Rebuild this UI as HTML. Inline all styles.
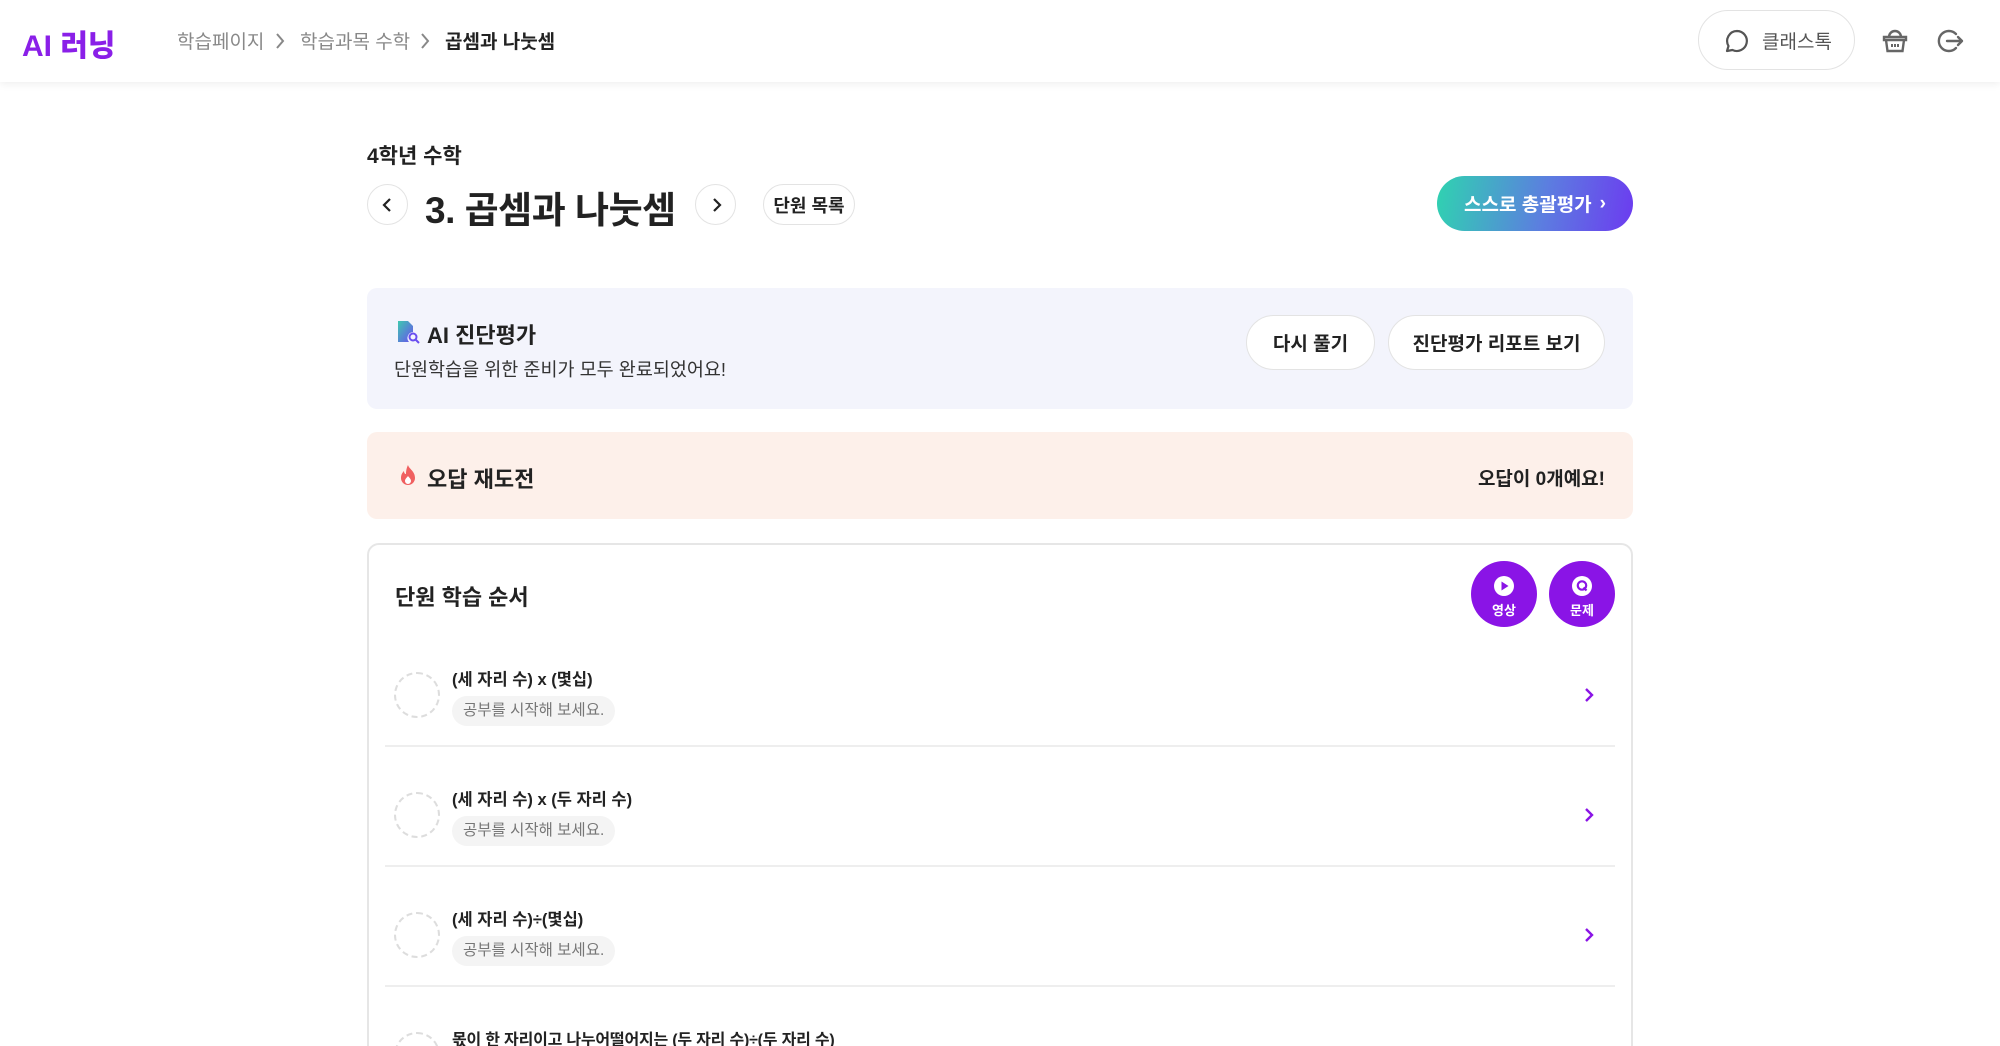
<!DOCTYPE html>
<html style="overflow:hidden;width:2000px;height:1046px"><head><meta charset="utf-8">
<style>
*{margin:0;padding:0;box-sizing:border-box}
body{width:2000px;height:1046px;overflow:hidden;background:#fff;font-family:"Liberation Sans","Noto Sans CJK KR",sans-serif;color:#222;position:relative}
.a{position:absolute}
.hdr{left:0;top:0;width:2000px;height:82px;background:#fff;box-shadow:0 2px 8px rgba(0,0,0,0.07);z-index:2}
.logo{left:22px;top:21px;font-size:30px;font-weight:900;color:#8a1fe8;letter-spacing:0px}
.bc{top:27px;font-size:19px;color:#888}
.pill{border:1.5px solid #e3e3e3;border-radius:999px;background:#fff}
.circ{border:1.5px solid #e3e3e3;border-radius:50%;background:#fff;display:flex;align-items:center;justify-content:center}
.btn{display:flex;align-items:center;justify-content:center;font-weight:700;font-size:19px;color:#222}
.item-t{font-size:16.5px;font-weight:700;color:#222}
.tag{background:#f4f4f4;border-radius:15px;height:30px;padding:0 11px;font-size:15.5px;color:#777;line-height:30px}
.dash{width:46px;height:46px;border:2.5px dashed #ddd;border-radius:50%}
.sep{height:2px;background:#eee;left:385px;width:1230px}
</style></head><body>
<div class="a hdr">
  <div class="a logo">AI 러닝</div>
  <div class="a bc" style="left:177px">학습페이지</div>
  <svg class="a" style="left:274px;top:32px" width="12" height="18" viewBox="0 0 12 18"><path d="M3 2l6 7-6 7" stroke="#888" stroke-width="2" fill="none"/></svg>
  <div class="a bc" style="left:300px">학습과목 수학</div>
  <svg class="a" style="left:419px;top:32px" width="12" height="18" viewBox="0 0 12 18"><path d="M3 2l6 7-6 7" stroke="#888" stroke-width="2" fill="none"/></svg>
  <div class="a bc" style="left:445px;color:#222;font-weight:700">곱셈과 나눗셈</div>
  <div class="a pill" style="left:1698px;top:10px;width:157px;height:60px"></div>
  <svg class="a" style="left:1724px;top:28px" width="26" height="26" viewBox="0 0 26 26"><path d="M13 3a10 10 0 1 1-4.5 19L3 23l1.5-5A10 10 0 0 1 13 3z" stroke="#555" stroke-width="2.2" fill="none" stroke-linejoin="round"/></svg>
  <div class="a" style="left:1762px;top:27px;font-size:19px;color:#555">클래스톡</div>
  <svg class="a" style="left:1880px;top:25px" width="30" height="30" viewBox="0 0 30 30"><path d="M9 12a6 6 0 0 1 12 0" stroke="#666" stroke-width="2.4" fill="none"/><path d="M4 12h22v3H4z" stroke="#666" stroke-width="2.4" fill="none"/><path d="M6 15l1.5 11h15L24 15" stroke="#666" stroke-width="2.4" fill="none"/><path d="M12 19v3M15 19v3M18 19v3" stroke="#666" stroke-width="2"/></svg>
  <svg class="a" style="left:1935px;top:26px" width="30" height="30" viewBox="0 0 30 30"><path d="M21 8A10 10 0 1 0 21 22" stroke="#666" stroke-width="2.4" fill="none" stroke-linecap="round"/><path d="M12 15h15M23 11l4 4-4 4" stroke="#666" stroke-width="2.4" fill="none" stroke-linecap="round" stroke-linejoin="round"/></svg>
</div>

<div class="a" style="left:367px;top:140px;font-size:21px;font-weight:700">4학년 수학</div>
<div class="a circ" style="left:367px;top:184px;width:41px;height:41px"><svg width="14" height="16" viewBox="0 0 14 16"><path d="M9 2L3 8l6 6" stroke="#222" stroke-width="2.2" fill="none"/></svg></div>
<div class="a" style="left:425px;top:180px;font-size:37px;font-weight:700;letter-spacing:-0.5px">3. 곱셈과 나눗셈</div>
<div class="a circ" style="left:695px;top:184px;width:41px;height:41px"><svg width="14" height="16" viewBox="0 0 14 16"><path d="M5 2l6 6-6 6" stroke="#222" stroke-width="2.2" fill="none"/></svg></div>
<div class="a pill btn" style="left:763px;top:184px;width:92px;height:41px;font-size:18px">단원 목록</div>
<div class="a btn" style="left:1437px;top:176px;width:196px;height:55px;border-radius:28px;background:linear-gradient(100deg,#2fd3b0 0%,#5c7de0 55%,#6c3bf0 100%);color:#fff;font-size:19px">스스로 총괄평가 <span style="margin-left:8px">›</span></div>

<div class="a" style="left:367px;top:288px;width:1266px;height:121px;background:#f3f4fc;border-radius:10px"></div>
<svg class="a" style="left:396px;top:320px" width="24" height="24" viewBox="0 0 24 24"><defs><linearGradient id="g" x1="0" y1="0" x2="1" y2="1"><stop offset="0" stop-color="#3ec9b0"/><stop offset="1" stop-color="#6a4ef0"/></linearGradient></defs><path d="M2 1h10l5 5v6a6 6 0 0 0-4 10H2z" fill="url(#g)"/><circle cx="17" cy="17" r="3.5" stroke="#6a4ef0" stroke-width="2" fill="none"/><path d="M19.5 19.5L23 23" stroke="#6a4ef0" stroke-width="2"/></svg>
<div class="a" style="left:427px;top:318px;font-size:22px;font-weight:700">AI 진단평가</div>
<div class="a" style="left:394px;top:356px;font-size:18.5px;color:#333">단원학습을 위한 준비가 모두 완료되었어요!</div>
<div class="a pill btn" style="left:1246px;top:315px;width:129px;height:55px">다시 풀기</div>
<div class="a pill btn" style="left:1388px;top:315px;width:217px;height:55px">진단평가 리포트 보기</div>

<div class="a" style="left:367px;top:432px;width:1266px;height:87px;background:#fdf0ea;border-radius:10px"></div>
<svg class="a" style="left:398px;top:464px" width="20" height="22" viewBox="0 0 20 22"><path d="M10 1c1 4 7 6 7 13a7 7 0 0 1-14 0c0-4 2-6 3-7 0 2 1 3 2 3 0-4 1-7 2-9z" fill="#f06060"/><path d="M10 12c1.5 2 3 3 3 5a3 3 0 0 1-6 0c0-2 1.5-3 3-5z" fill="#fff"/></svg>
<div class="a" style="left:427px;top:462px;font-size:22px;font-weight:700">오답 재도전</div>
<div class="a" style="left:1400px;top:464px;width:205px;text-align:right;font-size:19px;font-weight:700;white-space:nowrap">오답이 0개예요!</div>

<div class="a" style="left:367px;top:543px;width:1266px;height:530px;border:2px solid #e6e6e6;border-radius:12px"></div>
<div class="a" style="left:395px;top:580px;font-size:22px;font-weight:700">단원 학습 순서</div>
<div class="a" style="left:1471px;top:561px;width:66px;height:66px;border-radius:50%;background:#8a14e6;color:#fff;text-align:center">
  <svg style="margin-top:14px" width="22" height="22" viewBox="0 0 22 22"><circle cx="11" cy="11" r="10" fill="#fff"/><path d="M8.5 6.5v9l7-4.5z" fill="#8a14e6"/></svg>
  <div style="font-size:13px;font-weight:700;margin-top:-2px">영상</div></div>
<div class="a" style="left:1549px;top:561px;width:66px;height:66px;border-radius:50%;background:#8a14e6;color:#fff;text-align:center">
  <svg style="margin-top:14px" width="22" height="22" viewBox="0 0 22 22"><circle cx="11" cy="11" r="10" fill="#fff"/><circle cx="11" cy="10.5" r="4.2" stroke="#8a14e6" stroke-width="2.2" fill="none"/><path d="M12.5 12.5l3 3" stroke="#8a14e6" stroke-width="2.2"/></svg>
  <div style="font-size:13px;font-weight:700;margin-top:-2px">문제</div></div>

<div class="a dash" style="left:394px;top:672px"></div>
<div class="a item-t" style="left:452px;top:666px">(세 자리 수) x (몇십)</div>
<div class="a tag" style="left:452px;top:696px">공부를 시작해 보세요.</div>
<svg class="a" style="left:1583px;top:686px" width="12" height="18" viewBox="0 0 12 18"><path d="M3 3l6 6-6 6" stroke="#8a14e6" stroke-width="2.4" fill="none"/></svg>
<div class="a sep" style="top:745px"></div>

<div class="a dash" style="left:394px;top:792px"></div>
<div class="a item-t" style="left:452px;top:786px">(세 자리 수) x (두 자리 수)</div>
<div class="a tag" style="left:452px;top:816px">공부를 시작해 보세요.</div>
<svg class="a" style="left:1583px;top:806px" width="12" height="18" viewBox="0 0 12 18"><path d="M3 3l6 6-6 6" stroke="#8a14e6" stroke-width="2.4" fill="none"/></svg>
<div class="a sep" style="top:865px"></div>

<div class="a dash" style="left:394px;top:912px"></div>
<div class="a item-t" style="left:452px;top:906px">(세 자리 수)÷(몇십)</div>
<div class="a tag" style="left:452px;top:936px">공부를 시작해 보세요.</div>
<svg class="a" style="left:1583px;top:926px" width="12" height="18" viewBox="0 0 12 18"><path d="M3 3l6 6-6 6" stroke="#8a14e6" stroke-width="2.4" fill="none"/></svg>
<div class="a sep" style="top:985px"></div>

<div class="a dash" style="left:394px;top:1032px"></div>
<div class="a item-t" style="left:452px;top:1026px;font-size:16px;letter-spacing:-0.2px">몫이 한 자리이고 나누어떨어지는 (두 자리 수)÷(두 자리 수)</div>
</body></html>
